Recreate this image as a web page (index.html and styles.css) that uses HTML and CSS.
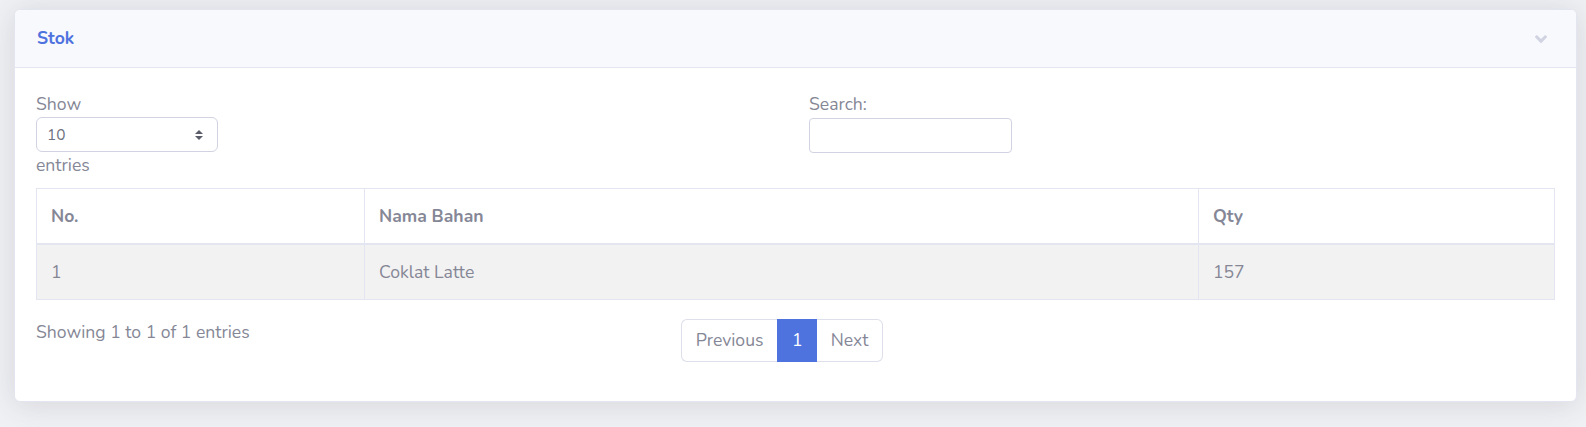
FILE: index.html
```html
<!DOCTYPE html>
<html lang="id">
<head>
<meta charset="utf-8">
<title>Stok</title>
<link rel="stylesheet" href="styles.css">
</head>
<body>
<div class="card">
  <div class="card-header">
    <h6 class="card-title">Stok</h6>
    <svg class="chevron" viewBox="0 150 320 210" width="12" height="8" aria-hidden="true"><path d="M143 352.3L7 216.3c-9.4-9.4-9.4-24.6 0-33.9l22.6-22.6c9.4-9.4 24.6-9.4 33.9 0l96.4 96.4 96.4-96.4c9.4-9.4 24.6-9.4 33.9 0l22.6 22.6c9.4 9.4 9.4 24.6 0 33.9l-136 136c-9.2 9.4-24.4 9.4-33.8 0z"/></svg>
  </div>
  <div class="card-body">
    <div class="dt-top">
      <div class="dt-length">
        <div class="lbl">Show</div>
        <div class="fake-select">
          <span>10</span>
          <svg class="updown" viewBox="0 0 8 10" width="8" height="10" aria-hidden="true"><path d="M4 0L8 4H0z M4 10L0 6H8z"/></svg>
        </div>
        <div class="lbl">entries</div>
      </div>
      <div class="dt-filter">
        <div class="lbl">Search:</div>
        <div class="search-input"></div>
      </div>
    </div>
    <table class="dt-table">
      <thead>
        <tr><th class="c1">No.</th><th class="c2">Nama Bahan</th><th class="c3">Qty</th></tr>
      </thead>
      <tbody>
        <tr class="odd"><td>1</td><td>Coklat Latte</td><td>157</td></tr>
      </tbody>
    </table>
    <div class="dt-bottom">
      <div class="dt-info">Showing 1 to 1 of 1 entries</div>
      <div class="dt-paginate">
        <ul class="pagination">
          <li class="page prev">Previous</li>
          <li class="page active">1</li>
          <li class="page next">Next</li>
        </ul>
      </div>
    </div>
  </div>
</div>
</body>
</html>
```
FILE: styles.css
```css
html, body {
  margin: 0;
  padding: 0;
}
body {
  background: #f0f1f5;
  padding: 9px 9px 0 14px;
  font-family: "Nunito", "Lato", "Open Sans", sans-serif;
  font-size: 17.6px;
  line-height: 1.5;
  color: #858796;
  height: 427px;
  box-sizing: border-box;
  overflow: hidden;
}
.card {
  background: #fff;
  border: 1px solid #e3e6f0;
  border-radius: 6px;
  box-shadow: 0 2.6px 30.8px 0 rgba(58, 59, 69, 0.15);
  overflow: hidden;
}
.card-header {
  height: 57px;
  background: #f8f9fc;
  border-bottom: 1px solid #e3e6f0;
  display: flex;
  align-items: center;
  justify-content: space-between;
  padding: 0 29px 0 22px;
}
.card-title {
  margin: 0;
  font-size: 17.6px;
  font-weight: 700;
  line-height: 1.2;
  color: #4e73df;
}
.chevron {
  fill: #d1d3e2;
  display: block;
}
.card-body {
  padding: 23px 21px 22px 21px;
}
.dt-top {
  display: grid;
  grid-template-columns: 1fr 1fr;
  column-gap: 27px;
}
.lbl {
  line-height: 26.4px;
  height: 26px;
}
.fake-select {
  width: 182px;
  height: 35px;
  box-sizing: border-box;
  border: 1px solid #d1d3e2;
  border-radius: 6px;
  display: flex;
  align-items: center;
  justify-content: space-between;
  padding: 0 14px 0 10px;
  font-size: 15.4px;
  color: #6e707e;
}
.updown {
  fill: #5a5c69;
  display: block;
}
.search-input {
  width: 203px;
  height: 35px;
  box-sizing: border-box;
  border: 1px solid #d1d3e2;
  border-radius: 4px;
  margin-top: 1px;
}
.dt-table {
  width: 100%;
  border-collapse: collapse;
  margin-top: 10px;
}
.dt-table th,
.dt-table td {
  border: 1px solid #e3e6f0;
  padding: 13.5px 14px;
  text-align: left;
  line-height: 26.4px;
}
.dt-table th {
  font-weight: 700;
  padding: 14px 14px 14px 14px;
  border-bottom: 2px solid #e3e6f0;
}
.dt-table .c1 { width: 299px; }
.dt-table .c2 { width: 805px; }
.dt-table tr.odd td {
  background: #f2f2f2;
}
.dt-bottom {
  display: grid;
  grid-template-columns: 5fr 7fr;
  column-gap: 21px;
  margin-top: 19px;
}
.dt-info {
  line-height: 26.4px;
}
.pagination {
  display: flex;
  list-style: none;
  margin: 0 0 17px 0;
  padding: 0;
}
.page {
  height: 43px;
  box-sizing: border-box;
  display: flex;
  align-items: center;
  justify-content: center;
  border: 1px solid #dddfeb;
  color: #858796;
  background: #fff;
}
.page.prev {
  width: 96px;
  border-radius: 6px 0 0 6px;
  border-right: none;
}
.page.active {
  width: 40px;
  background: #4e73df;
  border-color: #4e73df;
  color: #fff;
}
.page.next {
  width: 66px;
  border-left: none;
  border-radius: 0 6px 6px 0;
}
```
